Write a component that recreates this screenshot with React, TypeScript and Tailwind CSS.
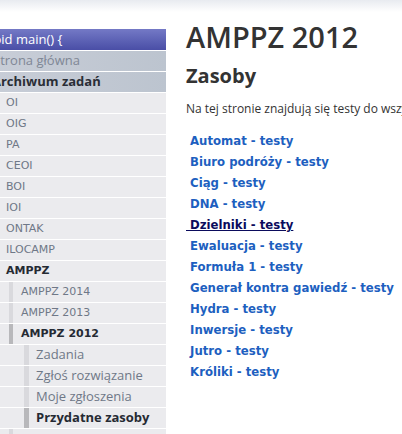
import React from "react";

type NavItem = {
  label: string;
  level: 1 | 2 | 3;
  bold?: boolean;
  active?: boolean;
};

const items: NavItem[] = [
  { label: "OI", level: 1 },
  { label: "OIG", level: 1 },
  { label: "PA", level: 1 },
  { label: "CEOI", level: 1 },
  { label: "BOI", level: 1 },
  { label: "IOI", level: 1 },
  { label: "ONTAK", level: 1 },
  { label: "ILOCAMP", level: 1 },
  { label: "AMPPZ", level: 1, bold: true },
  { label: "AMPPZ 2014", level: 2 },
  { label: "AMPPZ 2013", level: 2 },
  { label: "AMPPZ 2012", level: 2, bold: true, active: true },
  { label: "Zadania", level: 3 },
  { label: "Zgłoś rozwiązanie", level: 3 },
  { label: "Moje zgłoszenia", level: 3 },
  { label: "Przydatne zasoby", level: 3, bold: true, active: true },
  { label: "AMPPZ 2011", level: 2 },
];

const links = [
  "Automat",
  "Biuro podróży",
  "Ciąg",
  "DNA",
  "Dzielniki",
  "Ewaluacja",
  "Formuła 1",
  "Generał kontra gawiedź",
  "Hydra",
  "Inwersje",
  "Jutro",
  "Króliki",
];

const ubuntu = "font-['Open_Sans',sans-serif]";
const tahoma = "font-['DejaVu_Sans',sans-serif]";

function NavRow({ item }: { item: NavItem }) {
  const bar = item.active ? "bg-[#b8b8bb]" : "bg-[#d9d9dd]";
  const text = item.bold ? "text-[#252a33] font-bold" : "text-[#6f7887]";
  return (
    <div className="flex h-[21px] border-b border-white bg-[#ebebee]">
      {item.level === 1 && (
        <span className={`pl-[26px] flex items-center text-[11px] ${tahoma} ${text}`}>
          {item.label}
        </span>
      )}
      {item.level === 2 && (
        <>
          <span className={`ml-[29px] w-[4px] ${bar}`} />
          <span className={`pl-[8px] flex items-center text-[11px] ${tahoma} ${text}`}>
            {item.label}
          </span>
        </>
      )}
      {item.level === 3 && (
        <>
          <span className={`ml-[44px] w-[5px] ${bar}`} />
          <span className={`pl-[7px] flex items-center text-[13px] ${ubuntu} ${text}`}>
            {item.label}
          </span>
        </>
      )}
    </div>
  );
}

export default function App() {
  return (
    <div className="w-full h-[434px] overflow-hidden bg-white">
      <div className="h-[12px] bg-gradient-to-b from-[#e8ebf0] to-white" />
      <div className="flex">
        {/* Sidebar */}
        <div className="ml-[-20px] mt-[17px] w-[186px] shrink-0">
          <div className={`h-[22px] flex items-center pl-[7px] border-b border-white bg-gradient-to-b from-[#7479c6] to-[#4a4ea6] text-white text-[13px] ${ubuntu}`}>
            void main() {"{"}
          </div>
          <div className={`h-[21px] flex items-center pl-[13px] border-b border-white bg-gradient-to-r from-[#c9ced8] to-[#bcc4cf] text-[#7f8795] text-[13px] ${ubuntu}`}>
            Strona główna
          </div>
          <div className={`h-[21px] flex items-center pl-[12px] border-b border-white bg-gradient-to-r from-[#c9ced8] to-[#bcc4cf] text-[#2a2e36] font-bold text-[13px] ${ubuntu}`}>
            Archiwum zadań
          </div>
          {items.map((it) => (
            <NavRow key={it.label} item={it} />
          ))}
        </div>

        {/* Main */}
        <div className="ml-[20px] mt-[7px] whitespace-nowrap text-[#333333]">
          <h1 className={`text-[29px] leading-[36px] font-semibold ${ubuntu}`}>AMPPZ 2012</h1>
          <h2 className={`mt-[9px] text-[20px] leading-[24px] font-bold ${ubuntu}`}>Zasoby</h2>
          <p className={`mt-[12px] text-[12px] leading-[18px] ${ubuntu}`}>
            Na tej stronie znajdują się testy do wszystkich zadań z AMPPZ 2012.
          </p>
          <ul className="mt-[12px] font-['DejaVu_Sans_Condensed',sans-serif] font-bold text-[13px] leading-[21px]">
            {links.map((name) => (
              <li key={name}>
                <a
                  href="#"
                  className={
                    name === "Dzielniki"
                      ? "text-[#0b0b5c] underline whitespace-pre"
                      : "text-[#1d5fc0] no-underline whitespace-pre"
                  }
                >
                  {" " + name + " - testy"}
                </a>
              </li>
            ))}
          </ul>
        </div>
      </div>
    </div>
  );
}
